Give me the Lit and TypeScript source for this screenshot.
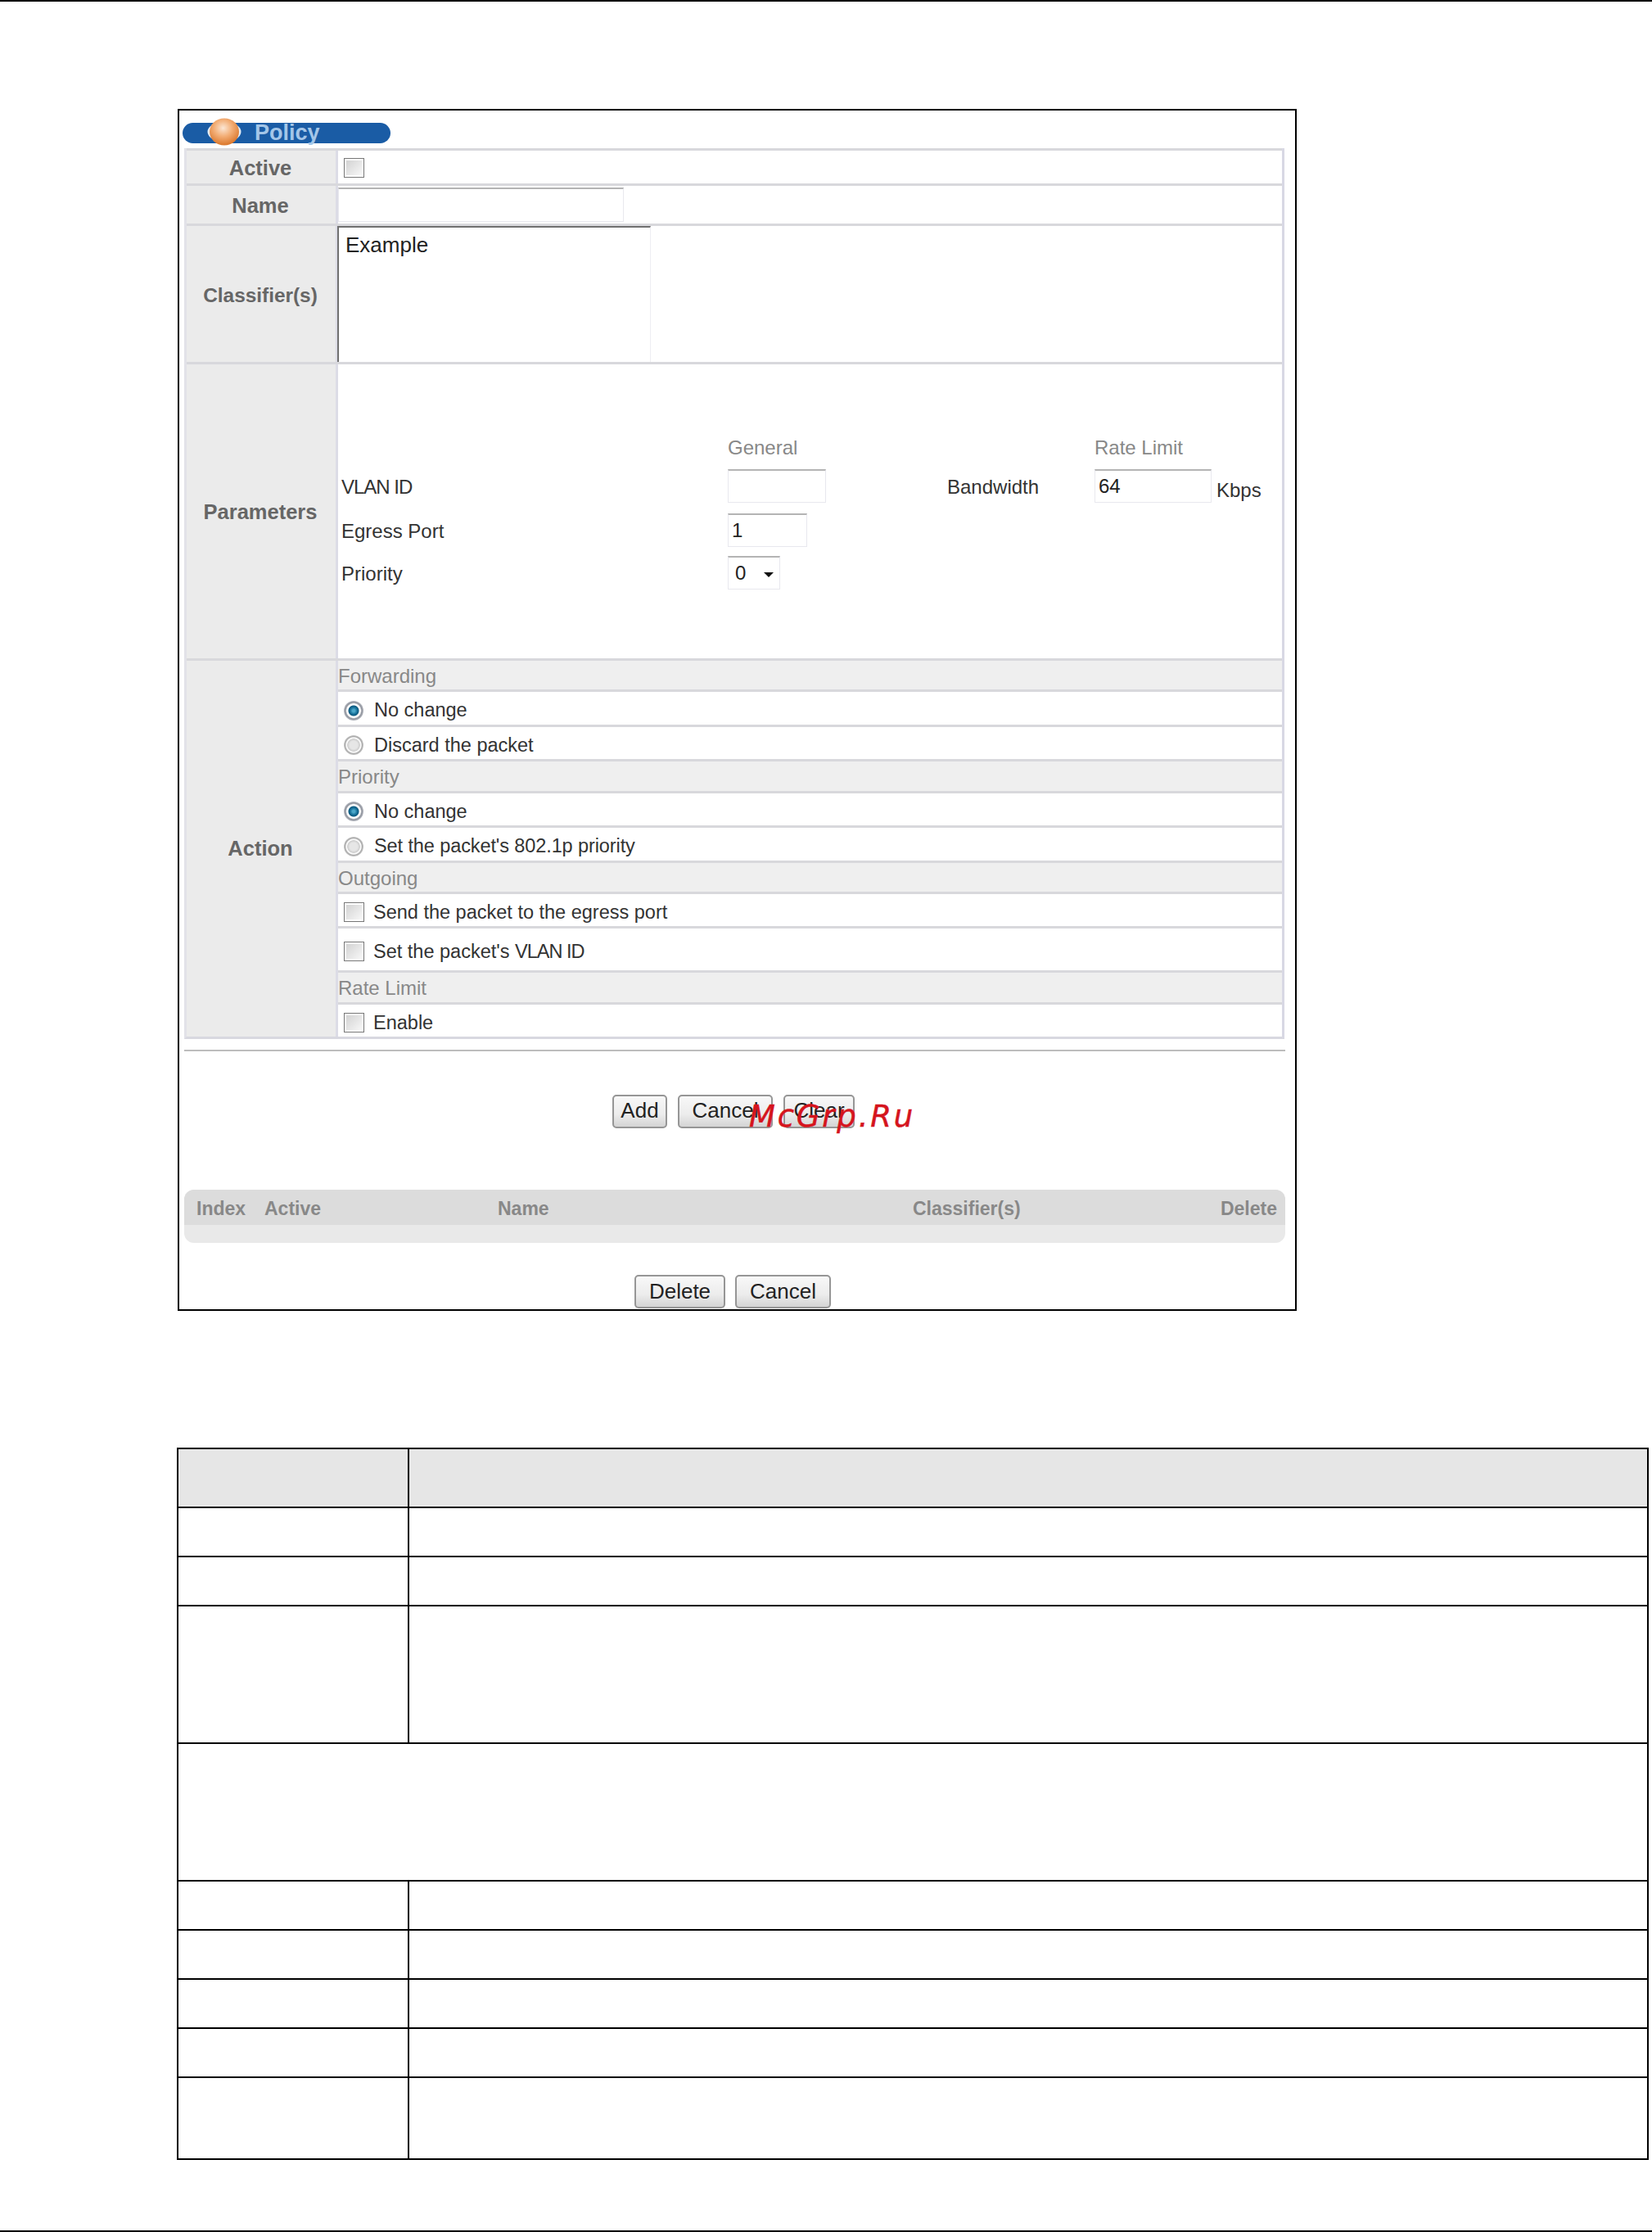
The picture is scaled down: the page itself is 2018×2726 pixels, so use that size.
import { LitElement, html, css } from "lit";
import { customElement } from "lit/decorators.js";

type Act =
  | { k: "sec"; t: string; h: number }
  | { k: "radio" | "check"; t: string; h: number; on?: boolean; tight?: boolean; vlan?: boolean };

const ACTIONS: Act[] = [
  { k: "sec", t: "Forwarding", h: 35 },
  { k: "radio", t: "No change", h: 43, on: true },
  { k: "radio", t: "Discard the packet", h: 42 },
  { k: "sec", t: "Priority", h: 39 },
  { k: "radio", t: "No change", h: 42, on: true },
  { k: "radio", t: "Set the packet's 802.1p priority", h: 43, tight: true },
  { k: "sec", t: "Outgoing", h: 38 },
  { k: "check", t: "Send the packet to the egress port", h: 42 },
  { k: "check", t: "Set the packet's ", h: 54, vlan: true },
  { k: "sec", t: "Rate Limit", h: 39 },
  { k: "check", t: "Enable", h: 42 },
];

const TABLE_ROWS: { h: number; full?: boolean; head?: boolean }[] = [
  { h: 72, head: true },
  { h: 60 },
  { h: 60 },
  { h: 168 },
  { h: 168, full: true },
  { h: 60 },
  { h: 60 },
  { h: 60 },
  { h: 60 },
  { h: 100 },
];

@customElement("app-root")
export class AppRoot extends LitElement {
  static styles = css`
    :host {
      display: block;
      position: relative;
      width: 2018px;
      height: 2726px;
      box-sizing: border-box;
      border-top: 2px solid #000;
      border-bottom: 2px solid #000;
      background: #fff;
      font-family: "Liberation Sans", Arial, sans-serif;
      color: #333;
    }
    * { box-sizing: border-box; }

    .frame {
      margin: 131px 0 0 217px;
      width: 1367px;
      height: 1468px;
      border: 2px solid #000;
      padding: 15px 0 0 6px;
    }
    .pill {
      position: relative;
      margin-left: -2px;
      width: 254px;
      height: 25px;
      border-radius: 13px;
      background: #1a5ca5;
      color: #a4c6e8;
      font-size: 27px;
      font-weight: 700;
      line-height: 25px;
      padding-left: 88px;
      white-space: nowrap;
    }
    .orb {
      position: absolute;
      left: 30px;
      top: -6px;
      width: 42px;
      height: 34px;
      overflow: visible;
    }

    .form {
      margin-top: 6px;
      width: 1344px;
      border-bottom: 3px solid #d8d8e0;
      border-left: 3px solid #e2e2e8;
      border-right: 3px solid #d8d8e4;
    }
    .row {
      display: grid;
      grid-template-columns: 185px 1fr;
      border-top: 3px solid #d8d8dc;
    }
    .r-active { height: 43px; }
    .r-name { height: 49px; }
    .r-class { height: 169px; }
    .r-param { height: 362px; }
    .r-action { height: 462px; }
    .label {
      display: flex;
      align-items: center;
      justify-content: center;
      background: #ebebeb;
      border-right: 3px solid #dcdce6;
      color: #666;
      font-size: 25.5px;
      font-weight: 700;
      padding: 2px 2px 0 0;
    }
    .label.narrow { font-size: 24.4px; padding-top: 3px; }
    .label.action { padding-top: 0; }
    .cell { min-width: 0; }
    .cell-active { padding: 9px 0 0 7px; }
    .cell-name { padding-top: 2px; }
    .cell-class { padding-top: 0; }

    .check {
      width: 25px;
      height: 24px;
      flex: none;
      border: 1px solid #777;
      box-shadow: inset 0 0 0 2px #fff;
      background: linear-gradient(135deg, #cfcfcf, #fbfbfb);
    }
    .radio {
      width: 24px;
      height: 24px;
      flex: none;
      border-radius: 50%;
      background: radial-gradient(circle closest-side, #e6e6e6 0 40%, #cdcdcd 62%, #fafafa 68% 76%, #a8a8a8 86%, #c8c8c8 100%);
    }
    .radio.on {
      background: radial-gradient(circle closest-side, #4aa6c8 0 14%, #17729b 34%, #0e5a80 50%, #fff 58% 70%, #8f939c 82%, #b5b8c0 100%);
    }

    .field {
      background: #fff;
      border: 1px solid #e8e8ee;
      border-top: 2px solid #b4b4b4;
      font-size: 24px;
      color: #222;
      line-height: 38px;
      padding-left: 4px;
    }
    .f-name { width: 349px; height: 42px; }
    .listbox {
      width: 383px;
      height: 166px;
      margin-left: -1px;
      border: 1px solid #eeeef2;
      border-top: 2px solid #707070;
      border-left: 2px solid #707070;
      border-bottom: none;
      font-size: 26px;
      color: #222;
      line-height: 30px;
      padding: 6px 0 0 8px;
    }

    .params {
      display: grid;
      grid-template-columns: 472px 268px 180px 1fr;
      grid-template-rows: 40px 54px 52px 41px;
      padding: 88px 0 0 4px;
      font-size: 24px;
      color: #333;
    }
    .params > div { line-height: 43px; }
    .params .head { color: #888; line-height: 28px; }
    .f-vlan { width: 120px; height: 41px; }
    .f-port { width: 97px; height: 41px; }
    .f-rate { width: 143px; height: 41px; }
    .rate-wrap { display: flex; }
    .kbps { margin: 4px 0 0 6px; }
    .select {
      position: relative;
      width: 64px;
      height: 41px;
      padding-left: 8px;
      font-size: 24px;
    }
    .arrow {
      position: absolute;
      left: 43px;
      top: 18px;
      width: 0;
      height: 0;
      border-left: 6px solid transparent;
      border-right: 6px solid transparent;
      border-top: 6px solid #111;
    }
    .vlan { letter-spacing: -1px; }

    .opt {
      display: flex;
      align-items: center;
      padding: 5px 0 0 7px;
      font-size: 23.5px;
      color: #333;
      gap: 11px;
      white-space: pre;
      border-top: 3px solid #d8d8dc;
    }
    .opt.radio-row { gap: 13px; }
    .opt.tight { letter-spacing: -0.1px; }
    .sec {
      padding: 2px 0 0 0;
      background: #efefef;
      color: #888;
      font-size: 24px;
    }
    .opt.first { border-top: none; }
    .cell-action { display: flex; flex-direction: column; }

    .rule {
      margin-top: 13px;
      width: 1345px;
      height: 2px;
      background: #bdbdbd;
    }
    .btns {
      display: flex;
      gap: 13px;
      height: 41px;
    }
    .btns1 { margin: 53px 0 0 523px; }
    .btns1 button { padding-bottom: 3px; }
    .btns2 { margin: 39px 0 0 550px; gap: 12px; }
    button {
      height: 41px;
      padding: 0;
      border: 2px solid #969696;
      border-radius: 5px;
      background: linear-gradient(#f8f8f8, #ececec 60%, #d4d4d4);
      font-family: "Liberation Sans", Arial, sans-serif;
      font-size: 26px;
      color: #222;
    }
    .w67 { width: 67px; }
    .w116 { width: 116px; }
    .w87 { width: 87px; }
    .w111 { width: 111px; }
    .w117 { width: 117px; }

    .list {
      margin-top: 75px;
      width: 1345px;
      height: 65px;
      border-radius: 12px;
      background: #e9e9e9;
      overflow: hidden;
    }
    .list-head {
      display: grid;
      grid-template-columns: 83px 285px 507px 1fr auto;
      align-items: center;
      height: 43px;
      padding: 4px 10px 0 15px;
      background: #dcdcdc;
      color: #888;
      font-size: 23px;
      font-weight: 700;
    }

    .watermark {
      position: absolute;
      left: 915px;
      top: 1337px;
      font-family: "DejaVu Sans", sans-serif;
      font-style: italic;
      font-size: 37px;
      letter-spacing: 2.8px;
      line-height: 50px;
      color: #d5141d;
      -webkit-text-stroke: 0.5px #d5141d;
      white-space: nowrap;
    }

    .table {
      margin: 167px 0 0 216px;
      width: 1798px;
      border-top: 2px solid #000;
      border-left: 2px solid #000;
    }
    .t-row {
      display: grid;
      grid-template-columns: 282px 1fr;
    }
    .t-row > div {
      border-right: 2px solid #000;
      border-bottom: 2px solid #000;
    }
    .t-row.head > div { background: #e6e6e6; }
    .t-row.full { grid-template-columns: 1fr; }
  `;

  private renderAction(a: Act, i: number) {
    const h = `height:${a.h}px`;
    const first = i === 0 ? "first" : "";
    if (a.k === "sec") return html`<div class="opt sec ${first}" style=${h}>${a.t}</div>`;
    if (a.k === "radio")
      return html`<div class="opt radio-row ${a.tight ? "tight" : ""}" style=${h}>
        <span class="radio ${a.on ? "on" : ""}"></span><span>${a.t}</span>
      </div>`;
    return html`<div class="opt" style=${h}>
      <span class="check"></span><span>${a.t}${a.vlan ? html`<span class="vlan">VLAN ID</span>` : ""}</span>
    </div>`;
  }

  render() {
    return html`
      <div class="frame">
        <div class="pill">
          <svg class="orb" viewBox="0 0 42 34">
            <defs>
              <radialGradient id="ball" cx="0.46" cy="0.36" r="0.62">
                <stop offset="0" stop-color="#fbe6d4" />
                <stop offset="0.5" stop-color="#f3ae76" />
                <stop offset="1" stop-color="#dc7a30" />
              </radialGradient>
            </defs>
            <ellipse cx="21" cy="17" rx="20.5" ry="12.5" fill="#e4edf6" />
            <ellipse cx="21" cy="17" rx="18" ry="16.5" fill="url(#ball)" />
          </svg>
          Policy
        </div>

        <div class="form">
          <div class="row r-active">
            <div class="label">Active</div>
            <div class="cell cell-active"><div class="check"></div></div>
          </div>
          <div class="row r-name">
            <div class="label">Name</div>
            <div class="cell cell-name"><div class="field f-name"></div></div>
          </div>
          <div class="row r-class">
            <div class="label narrow">Classifier(s)</div>
            <div class="cell cell-class"><div class="listbox">Example</div></div>
          </div>
          <div class="row r-param">
            <div class="label">Parameters</div>
            <div class="cell params">
              <div></div>
              <div class="head">General</div>
              <div></div>
              <div class="head">Rate Limit</div>

              <div class="vlan">VLAN ID</div>
              <div><div class="field f-vlan"></div></div>
              <div>Bandwidth</div>
              <div class="rate-wrap">
                <div class="field f-rate">64</div>
                <span class="kbps">Kbps</span>
              </div>

              <div>Egress Port</div>
              <div><div class="field f-port">1</div></div>
              <div></div>
              <div></div>

              <div>Priority</div>
              <div><div class="field select">0<span class="arrow"></span></div></div>
              <div></div>
              <div></div>
            </div>
          </div>
          <div class="row r-action">
            <div class="label action">Action</div>
            <div class="cell cell-action">${ACTIONS.map((a, i) => this.renderAction(a, i))}</div>
          </div>
        </div>

        <div class="rule"></div>

        <div class="btns btns1">
          <button class="w67">Add</button>
          <button class="w116">Cancel</button>
          <button class="w87">Clear</button>
        </div>

        <div class="list">
          <div class="list-head">
            <span>Index</span><span>Active</span><span>Name</span><span>Classifier(s)</span><span>Delete</span>
          </div>
        </div>

        <div class="btns btns2">
          <button class="w111">Delete</button>
          <button class="w117">Cancel</button>
        </div>
      </div>

      <div class="watermark">McGrp.Ru</div>

      <div class="table">
        ${TABLE_ROWS.map(
          (r) => html`<div
            class="t-row ${r.head ? "head" : ""} ${r.full ? "full" : ""}"
            style="height:${r.h}px"
          >
            ${r.full ? html`<div></div>` : html`<div></div><div></div>`}
          </div>`
        )}
      </div>
    `;
  }
}
